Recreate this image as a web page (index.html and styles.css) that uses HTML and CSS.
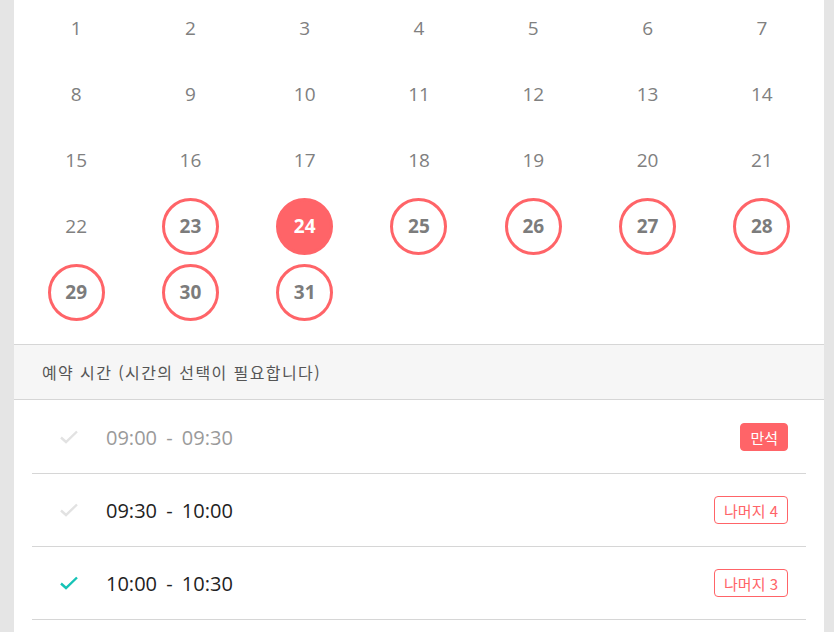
FILE: index.html
```html
<!DOCTYPE html>
<html lang="ko">
<head>
<meta charset="utf-8">
<link rel="stylesheet" href="styles.css">
</head>
<body>
<div class="panel">
  <div class="calendar">
    <div class="day">1</div><div class="day">2</div><div class="day">3</div><div class="day">4</div><div class="day">5</div><div class="day">6</div><div class="day">7</div>
    <div class="day">8</div><div class="day">9</div><div class="day">10</div><div class="day">11</div><div class="day">12</div><div class="day">13</div><div class="day">14</div>
    <div class="day">15</div><div class="day">16</div><div class="day">17</div><div class="day">18</div><div class="day">19</div><div class="day">20</div><div class="day">21</div>
    <div class="day">22</div>
    <div class="day"><span class="ring">23</span></div>
    <div class="day"><span class="ring selected">24</span></div>
    <div class="day"><span class="ring">25</span></div>
    <div class="day"><span class="ring">26</span></div>
    <div class="day"><span class="ring">27</span></div>
    <div class="day"><span class="ring">28</span></div>
    <div class="day"><span class="ring">29</span></div>
    <div class="day"><span class="ring">30</span></div>
    <div class="day"><span class="ring">31</span></div>
  </div>
  <div class="section-head">예약 시간 (시간의 선택이 필요합니다)</div>
  <ul class="slots">
    <li class="slot disabled">
      <svg class="check" width="20" height="14" viewBox="0 0 20 14"><path d="M2 7.5 L7 12 L18 1.5" fill="none" stroke="currentColor" stroke-width="2.4"/></svg>
      <span class="time">09:00 - 09:30</span>
      <span class="badge full">만석</span>
    </li>
    <li class="slot">
      <svg class="check" width="20" height="14" viewBox="0 0 20 14"><path d="M2 7.5 L7 12 L18 1.5" fill="none" stroke="currentColor" stroke-width="2.4"/></svg>
      <span class="time">09:30 - 10:00</span>
      <span class="badge">나머지 4</span>
    </li>
    <li class="slot active">
      <svg class="check" width="20" height="14" viewBox="0 0 20 14"><path d="M2 7.5 L7 12 L18 1.5" fill="none" stroke="currentColor" stroke-width="2.4"/></svg>
      <span class="time">10:00 - 10:30</span>
      <span class="badge">나머지 3</span>
    </li>
  </ul>
</div>
</body>
</html>
```
FILE: styles.css
```css
html, body {
  margin: 0;
  padding: 0;
  background: #e5e5e5;
  font-family: "Open Sans", "Noto Sans CJK KR", sans-serif;
}
.panel {
  margin: 0 10px 0 14px;
  background: #fff;
  min-height: 632px;
}
.calendar {
  display: grid;
  grid-template-columns: repeat(7, 1fr);
  row-gap: 10px;
  padding: 0 5px 24px;
}
.day {
  height: 56px;
  display: flex;
  align-items: center;
  justify-content: center;
  font-size: 19px;
  color: #808080;
}
.ring {
  width: 57px;
  height: 57px;
  box-sizing: border-box;
  border: 3px solid #ff6468;
  border-radius: 50%;
  display: flex;
  align-items: center;
  justify-content: center;
  font-weight: 700;
  color: #7c7c7c;
  font-size: 19px;
}
.ring.selected {
  background: #ff6468;
  color: #fff;
}
.section-head {
  border-top: 1px solid #d6d6d6;
  border-bottom: 1px solid #d6d6d6;
  background: #f6f6f6;
  height: 54px;
  display: flex;
  align-items: center;
  padding-left: 28px;
  font-family: "Noto Sans CJK KR", sans-serif;
  font-size: 16px;
  letter-spacing: 1.4px;
  color: #555;
}
.slots {
  list-style: none;
  margin: 0 18px;
  padding: 1px 0 0;
}
.slot {
  display: flex;
  align-items: center;
  height: 72px;
  border-bottom: 1px solid #d6d6d6;
  padding: 0 18px 0 27px;
}
.check {
  color: #e2e2e2;
  margin-right: 27px;
  flex: none;
}
.slot.active .check {
  color: #16c3b6;
}
.time {
  flex: 1;
  font-size: 20px;
  color: #222;
  word-spacing: 4px;
}
.slot.disabled .time {
  color: #9a9a9a;
}
.badge {
  font-family: "Noto Sans CJK KR", sans-serif;
  font-size: 15px;
  color: #ff6468;
  border: 1px solid #ff6468;
  border-radius: 4px;
  height: 28px;
  box-sizing: border-box;
  padding: 0 9px;
  display: flex;
  align-items: center;
}
.badge.full {
  background: #ff6468;
  color: #fff;
}
```
